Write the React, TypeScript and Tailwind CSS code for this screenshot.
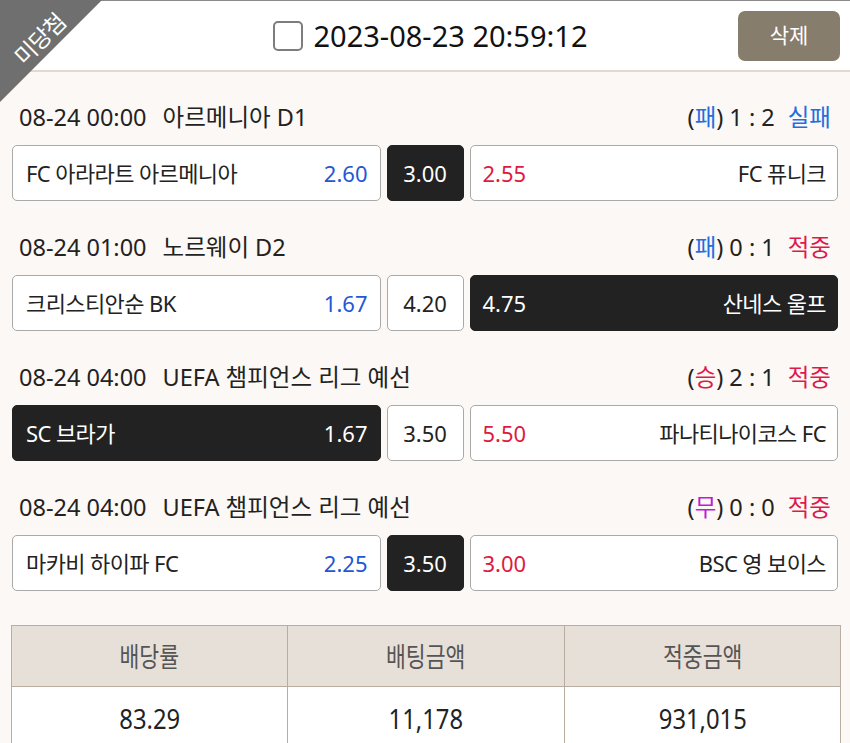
import React from 'react';

type Side = 'home' | 'draw' | 'away';

interface Match {
  time: string;
  league: string;
  home: string;
  away: string;
  odds: [string, string, string];
  picked: Side;
  pick: { label: string; color: string };
  score: string;
  result: 'hit' | 'miss';
}

const matches: Match[] = [
  {
    time: '08-24 00:00',
    league: '아르메니아 D1',
    home: 'FC 아라라트 아르메니아',
    away: 'FC 퓨니크',
    odds: ['2.60', '3.00', '2.55'],
    picked: 'draw',
    pick: { label: '패', color: 'text-[#1f6fe0]' },
    score: '1 : 2',
    result: 'miss',
  },
  {
    time: '08-24 01:00',
    league: '노르웨이 D2',
    home: '크리스티안순 BK',
    away: '산네스 울프',
    odds: ['1.67', '4.20', '4.75'],
    picked: 'away',
    pick: { label: '패', color: 'text-[#1f6fe0]' },
    score: '0 : 1',
    result: 'hit',
  },
  {
    time: '08-24 04:00',
    league: 'UEFA 챔피언스 리그 예선',
    home: 'SC 브라가',
    away: '파나티나이코스 FC',
    odds: ['1.67', '3.50', '5.50'],
    picked: 'home',
    pick: { label: '승', color: 'text-[#e0194a]' },
    score: '2 : 1',
    result: 'hit',
  },
  {
    time: '08-24 04:00',
    league: 'UEFA 챔피언스 리그 예선',
    home: '마카비 하이파 FC',
    away: 'BSC 영 보이스',
    odds: ['2.25', '3.50', '3.00'],
    picked: 'draw',
    pick: { label: '무', color: 'text-[#c21ad6]' },
    score: '0 : 0',
    result: 'hit',
  },
];

const boxBase = 'h-[56px] rounded-[5px] border flex items-center text-[22px]';
const boxOn = 'bg-[#222222] border-[#222222] text-white';
const boxOff = 'bg-white border-[#a9a9a9] text-[#222222]';

function MatchBlock({ m }: { m: Match }) {
  return (
    <div className="pt-[22px] pb-[10px]">
      <div className="flex items-center justify-between h-[30px] px-[7px] text-[23.5px] text-[#222222]">
        <div className="flex items-center">
          <span>{m.time}</span>
          <span className="ml-[16px]">{m.league}</span>
        </div>
        <div className="flex items-center">
          <span>
            (<span className={m.pick.color}>{m.pick.label}</span>)
          </span>
          <span className="ml-[6px]">{m.score}</span>
          {m.result === 'hit' ? (
            <span className="ml-[13px] text-[#e0194a]">적중</span>
          ) : (
            <span className="ml-[13px] text-[#1f6fe0]">실패</span>
          )}
        </div>
      </div>
      <div className="grid grid-cols-[1fr_77px_1fr] gap-[6px] mt-[12px]">
        <div className={`${boxBase} justify-between pl-[13px] pr-[12px] ${m.picked === 'home' ? boxOn : boxOff}`}>
          <span className="tracking-[-0.6px]">{m.home}</span>
          <span className={m.picked === 'home' ? 'text-white' : 'text-[#1f57d6]'}>{m.odds[0]}</span>
        </div>
        <div className={`${boxBase} justify-center ${m.picked === 'draw' ? boxOn : boxOff}`}>{m.odds[1]}</div>
        <div className={`${boxBase} justify-between pl-[12px] pr-[11px] ${m.picked === 'away' ? boxOn : boxOff}`}>
          <span className={m.picked === 'away' ? 'text-white' : 'text-[#e0193f]'}>{m.odds[2]}</span>
          <span className="tracking-[-0.6px]">{m.away}</span>
        </div>
      </div>
    </div>
  );
}

export default function App() {
  return (
    <div
      className="relative w-[850px] h-[743px] overflow-hidden bg-[#fbf8f5]"
      style={{ fontFamily: '"Noto Sans", "Noto Sans CJK KR", sans-serif' }}
    >
      {/* corner ribbon */}
      <div className="absolute left-0 top-0 w-[102px] h-[102px] bg-[#6f6f6f] [clip-path:polygon(0_0,100%_0,0_100%)] z-10" />
      <div className="absolute left-0 top-0 w-[78px] h-[76px] z-20 flex items-center justify-center">
        <span
          className="-rotate-45 text-white text-[23px] leading-none tracking-[-1px]"
          style={{ fontFamily: '"Noto Sans CJK KR", sans-serif' }}
        >
          미당첨
        </span>
      </div>

      <header className="grid grid-cols-[1fr_auto_1fr] items-center h-[72px] bg-white border-t border-t-[#8a8a8a] border-b-2 border-b-[#e3d9cf]">
        <div />
        <div className="flex items-center gap-[11px] pl-[10px]">
          <div className="w-[30px] h-[30px] rounded-[5px] border-2 border-[#7d7d7d] bg-white" />
          <span className="text-[29px] text-[#111111] leading-none">2023-08-23 20:59:12</span>
        </div>
        <div className="flex justify-end pr-[10px]">
          <button className="w-[102px] h-[50px] rounded-[7px] bg-[#877d6d] text-white text-[21px]">삭제</button>
        </div>
      </header>

      <main className="px-[12px] pt-[9px]">
        {matches.map((m, i) => (
          <MatchBlock key={i} m={m} />
        ))}

        <table className="w-[830px] -ml-[1px] mt-[24px] border-collapse text-center text-[#333333]">
          <thead>
            <tr className="h-[61px] bg-[#e7e0d8]">
              {['배당률', '배팅금액', '적중금액'].map((h) => (
                <th key={h} className="w-1/3 border border-[#b8ada0] font-normal text-[#555555]">
                  <span
                    className="inline-block scale-x-[0.8] text-[27px]"
                    style={{ fontFamily: '"Noto Sans CJK KR", sans-serif' }}
                  >
                    {h}
                  </span>
                </th>
              ))}
            </tr>
          </thead>
          <tbody>
            <tr className="h-[62px] bg-white">
              {['83.29', '11,178', '931,015'].map((v) => (
                <td key={v} className="border border-[#b8ada0] text-[#222222]">
                  <span className="inline-block scale-x-[0.85] text-[28px]">{v}</span>
                </td>
              ))}
            </tr>
          </tbody>
        </table>
      </main>
    </div>
  );
}
